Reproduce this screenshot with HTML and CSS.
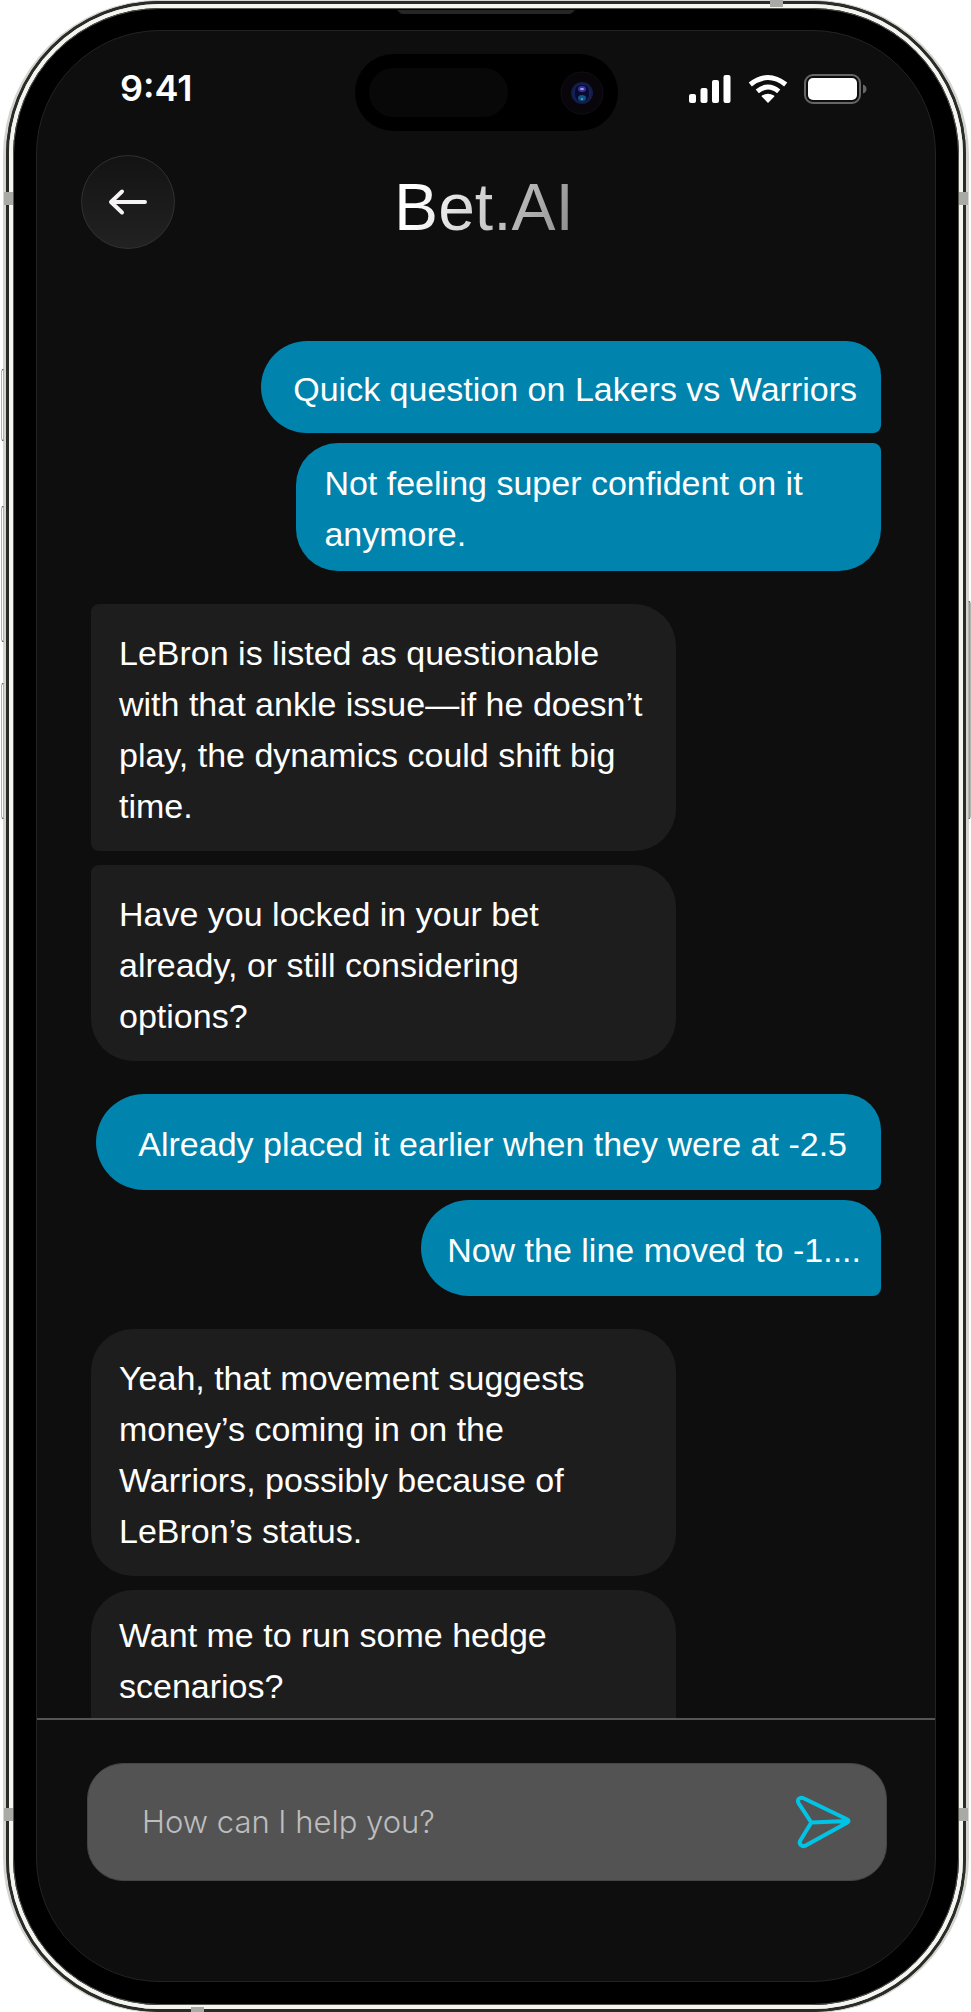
FILE: index.html
```html
<!DOCTYPE html>
<html lang="en">
<head>
<meta charset="utf-8">
<meta name="viewport" content="width=device-width, initial-scale=1">
<title>Bet.AI</title>
<link rel="stylesheet" href="styles.css">
</head>
<body>
<div class="phone">
  <span class="key key-action"></span>
  <span class="key key-up"></span>
  <span class="key key-down"></span>
  <span class="key key-power"></span>
  <span class="antenna antenna-left antenna-high"></span>
  <span class="antenna antenna-left antenna-low"></span>
  <span class="antenna antenna-right antenna-high"></span>
  <span class="antenna antenna-right antenna-low"></span>
  <span class="antenna antenna-top"></span>
  <span class="antenna antenna-bottom"></span>
  <div class="rim">
    <div class="band">
      <div class="bezel">
        <svg class="speaker" viewBox="0 0 180 6" aria-hidden="true"><path d="M1 1H179L176 4Q175 5 173 5H7Q5 5 4 4Z"/></svg>
        <div class="screen">
          <header class="top">
            <div class="status">
              <time class="clock">9:41</time>
              <div class="island"><span class="sensor"></span>
                <svg class="lens" viewBox="0 0 44 44" aria-hidden="true">
                  <circle cx="22" cy="22" r="21" fill="#08060b" stroke="#110f14"/>
                  <circle cx="22" cy="22" r="11" fill="#151c48"/>
                  <circle cx="22" cy="22" r="9" fill="#142358"/>
                  <rect x="15" y="14" width="14" height="16" rx="6" fill="#080a30"/>
                  <ellipse cx="22" cy="18" rx="4" ry="3" fill="#39349a"/>
                  <ellipse cx="22" cy="18" rx="2" ry="1" fill="#a9a4f0"/>
                  <ellipse cx="22" cy="27" rx="4" ry="3" fill="#145588"/>
                  <circle cx="22" cy="28" r="1" fill="#45b5c0"/>
                </svg>
              </div>
              <svg class="indicators" viewBox="0 0 180 30" role="img" aria-label="Signal, Wi-Fi and battery full">
                <g fill="#fff">
                  <rect x="1" y="20" width="7" height="9" rx="2"/>
                  <rect x="12.500" y="14" width="7" height="15" rx="2"/>
                  <rect x="24" y="6" width="7" height="23" rx="2"/>
                  <rect x="35.500" y="1" width="7" height="28" rx="2"/>
                  <path d="M80 29 86.300 22.500Q86.500 22 86 21.600Q80 17.800 74 21.600Q73.500 22 73.700 22.500Z"/>
                </g>
                <g fill="none" stroke="#fff" stroke-width="5">
                  <path d="M69.300 17.400Q80 8.600 90.700 17.400"/>
                  <path d="M62.300 10.500Q80 -3.500 97.700 10.500"/>
                </g>
                <rect x="117" y="1" width="55" height="28" rx="8" fill="none" stroke="#666" stroke-width="2"/>
                <rect x="120" y="4" width="49" height="22" rx="5" fill="#fff"/>
                <path d="M175 10.500Q178.500 11.500 178.500 15T175 19.500Z" fill="#666"/>
              </svg>
            </div>
            <div class="titlebar">
              <button class="back" type="button" aria-label="Back">
                <svg viewBox="0 0 40 28" aria-hidden="true"><path d="M37 14H3M14 3.500 3 14 14 24.500"/></svg>
              </button>
              <h1 class="brand">Bet.AI</h1>
            </div>
          </header>
          <main class="chat">
            <p class="bubble user first">Quick question on Lakers vs Warriors</p>
            <p class="bubble user follow wrapped">Not feeling super confident on it anymore.</p>
            <p class="bubble bot squared">LeBron is listed as questionable with that ankle issue—if he doesn’t play, the dynamics could shift big time.</p>
            <p class="bubble bot next top-squared">Have you locked in your bet already, or still considering options?</p>
            <p class="bubble user roomy">Already placed it earlier when they were at -2.5</p>
            <p class="bubble user follow tall">Now the line moved to -1....</p>
            <p class="bubble bot">Yeah, that movement suggests money’s coming in on the Warriors, possibly because of LeBron’s status.</p>
            <p class="bubble bot next cut">Want me to run some hedge scenarios?</p>
          </main>
          <form class="composer">
            <div class="field">
              <input class="message" type="text" aria-label="Message" placeholder="How can I help you?">
              <button class="send" type="submit" aria-label="Send">
                <svg viewBox="0 0 56 56" aria-hidden="true"><path d="M7.500 3.300 51 24.300Q54 26 51 27.800L9.700 50.500C6 52.500 2.400 49 4.300 45.500L15.300 27.500 2.700 8.300C0.500 4.500 4 1.500 7.500 3.300ZM15.300 27.500 52 26"/></svg>
              </button>
            </div>
          </form>
        </div>
      </div>
    </div>
  </div>
</div>
</body>
</html>
```
FILE: styles.css
```css
* { box-sizing: border-box; }

body {
  margin: 0;
  background: #fff;
  color: #fff;
  font-family: "Liberation Sans", Arial, sans-serif;
}

/* Device frame, from the outside in */
.phone {
  position: relative;
  display: flex;
  min-height: 100vh;
  margin: 0 2px 0 3px;
  border: solid #d4d4d1;
  border-width: 1px 3px;
  border-radius: 156px;
  background: #2b2c28;
}

.rim, .band, .bezel, .screen {
  display: flex;
  flex: 1;
  min-width: 0;
}

.rim {
  border: 3px solid #2b2c28;
  border-radius: 154px;
  background: #f4f4f1;
}

.band {
  border: 4px solid #f4f4f1;
  border-radius: 151px;
  background: #000;
}

.bezel {
  position: relative;
  padding: 21px 22px 22px;
  border: 1px solid #55554f;
  border-radius: 147px;
  background: #000;
}

.speaker {
  position: absolute;
  top: 0;
  left: 50%;
  width: 180px;
  margin-left: -90px;
  fill: #262626;
}

.screen {
  flex-direction: column;
  border: 1px solid #232323;
  border-radius: 124px;
  background: #0e0e0e;
  overflow: hidden;
}

.key {
  position: absolute;
  left: -5px;
  width: 3px;
  border: 1px solid #b5b5b0;
  border-top-color: #222;
  border-bottom-color: #222;
  border-radius: 3px 0 0 3px;
  background: #fff;
}
.key-action { top: 368px; height: 72px; }
.key-up { top: 505px; height: 136px; }
.key-down { top: 682px; height: 136px; }
.key-power {
  top: 600px;
  right: -5px;
  left: auto;
  height: 218px;
  border-radius: 0 3px 3px 0;
  background: #999;
}

.antenna {
  position: absolute;
  z-index: 1;
  width: 9px;
  height: 13px;
  background: #a9aaa6;
}
.antenna-left { left: -2px; }
.antenna-right { right: -2px; }
.antenna-high { top: 191px; }
.antenna-low { bottom: 191px; }
.antenna-top { top: -1px; right: 183px; width: 13px; height: 7px; }
.antenna-bottom { bottom: -1px; left: 185px; width: 13px; height: 6px; }

/* Status bar and title */
.top { padding: 23px 44px 0; }

.status {
  display: grid;
  grid-template-columns: 1fr 263px 1fr;
  align-items: center;
}

.clock {
  padding: 0 0 10px 39px;
  font: 600 36px/44px Inter, sans-serif;
}

.island {
  display: flex;
  align-items: center;
  justify-content: space-between;
  height: 77px;
  padding: 0 14px;
  border-radius: 39px;
  background: #000;
}

.sensor {
  width: 139px;
  height: 49px;
  border-radius: 25px;
  background: #080808;
}

.lens { width: 44px; height: 44px; }

.indicators {
  justify-self: end;
  width: 180px;
  margin: 0 23px 8px 0;
}

.titlebar {
  display: grid;
  grid-template-columns: 94px 1fr 94px;
  align-items: center;
  margin-top: 24px;
}

.back {
  display: grid;
  place-items: center;
  width: 94px;
  height: 94px;
  padding: 0;
  border: 1px solid #303030;
  border-radius: 50%;
  background: linear-gradient(#131313, #222);
}
.back svg {
  width: 40px;
  height: 28px;
  fill: none;
  stroke: #f5f3f3;
  stroke-width: 4;
  stroke-linecap: round;
  stroke-linejoin: round;
}

.brand {
  justify-self: center;
  margin: 10px 4px 0 0;
  background: linear-gradient(110deg, #fff 15%, #8a8a8a);
  background-clip: text;
  color: transparent;
  font-size: 66px;
  font-weight: 400;
  line-height: 76px;
}

/* Conversation */
.chat {
  display: flex;
  flex: 1;
  flex-direction: column;
  padding: 92px 54px 0;
}

.bubble {
  max-width: 100%;
  margin: 33px 0 0;
  font-size: 34px;
  line-height: 51px;
}

.bot {
  align-self: flex-start;
  width: 74%;
  padding: 24px 30px 19px 28px;
  border-radius: 42px;
  background: #1d1d1d;
}
.squared { border-radius: 8px 42px 42px 8px; }
.top-squared { border-radius: 8px 42px 42px 42px; }
.next { margin-top: 14px; }
.cut {
  padding: 20px 28px 6px;
  border-radius: 42px 42px 0 0;
}

.user {
  align-self: flex-end;
  border-radius: 48px 36px 8px 48px;
  background: #0083ac;
}
.first { margin-top: 0; padding: 23px 24px 18px 32px; }
.follow { margin-top: 10px; }
.wrapped {
  width: 74%;
  padding: 15px 28px 11px;
  border-radius: 42px 8px 42px 42px;
}
.roomy { padding: 25px 34px 20px 42px; }
.tall { padding: 25px 20px 20px 26px; }

/* Composer */
.composer {
  padding: 43px 48px 100px 50px;
  border-top: 2px solid #555;
}

.field {
  display: flex;
  align-items: center;
  height: 118px;
  padding: 0 34px 0 54px;
  border: 1px solid #444;
  border-radius: 36px;
  background: #535353;
}

.message {
  flex: 1;
  min-width: 0;
  padding: 0;
  border: 0;
  outline: 0;
  background: none;
  color: #fff;
  font: 300 31px/40px Inter, sans-serif;
}
.message::placeholder { color: #bdbdbd; opacity: 1; }

.send {
  width: 56px;
  height: 56px;
  margin-top: 2px;
  padding: 0;
  border: 0;
  background: none;
}
.send svg {
  display: block;
  fill: none;
  stroke: #00c4e6;
  stroke-width: 4;
  stroke-linejoin: round;
}
```
